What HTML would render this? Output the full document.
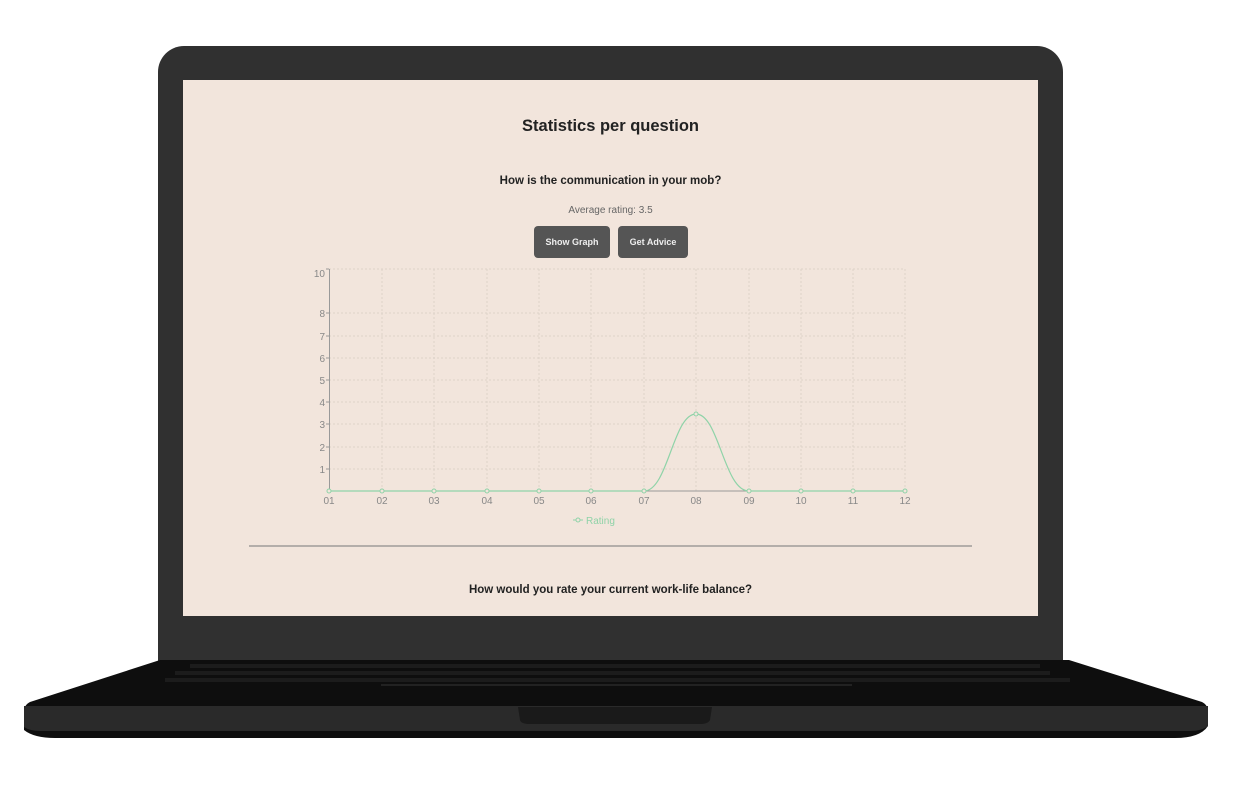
<!DOCTYPE html>
<html><head><style>
body{margin:0;width:1244px;height:789px;background:#fff;position:relative;overflow:hidden;font-family:"Liberation Sans",sans-serif}
.lid{position:absolute;left:158px;top:46px;width:905px;height:630px;background:#303030;border-radius:26px 26px 0 0}
.screen{position:absolute;left:183px;top:80px;width:855px;height:536px;background:#f2e5dc;overflow:hidden}
.t{position:absolute;width:100%;text-align:center;color:#222;font-weight:bold}
.btn{position:absolute;top:146px;height:32px;background:#555;border-radius:4px;color:#eee;font-size:9px;font-weight:bold;line-height:32px;text-align:center}
</style></head><body>
<div class="lid"></div>
<div class="screen">
<div class="t" style="top:37px;font-size:16.5px">Statistics per question</div>
<div class="t" style="top:95px;font-size:11.5px">How is the communication in your mob?</div>
<div class="t" style="top:125px;font-size:10px;font-weight:normal;color:#666">Average rating: 3.5</div>
<div class="btn" style="left:351px;width:76px">Show Graph</div>
<div class="btn" style="left:435px;width:70px">Get Advice</div>
<svg style="position:absolute;left:0;top:0" width="855" height="536">
<g stroke="#ddd2c9" stroke-dasharray="2,2" stroke-width="1">
<line x1="146" y1="189" x2="722" y2="189"/>
<line x1="146" y1="233" x2="722" y2="233"/><line x1="146" y1="256" x2="722" y2="256"/><line x1="146" y1="278" x2="722" y2="278"/><line x1="146" y1="300" x2="722" y2="300"/><line x1="146" y1="322" x2="722" y2="322"/><line x1="146" y1="344" x2="722" y2="344"/><line x1="146" y1="367" x2="722" y2="367"/><line x1="146" y1="389" x2="722" y2="389"/>
<line x1="199" y1="189" x2="199" y2="411"/><line x1="251" y1="189" x2="251" y2="411"/><line x1="304" y1="189" x2="304" y2="411"/><line x1="356" y1="189" x2="356" y2="411"/><line x1="408" y1="189" x2="408" y2="411"/><line x1="461" y1="189" x2="461" y2="411"/><line x1="513" y1="189" x2="513" y2="411"/><line x1="566" y1="189" x2="566" y2="411"/><line x1="618" y1="189" x2="618" y2="411"/><line x1="670" y1="189" x2="670" y2="411"/><line x1="722" y1="189" x2="722" y2="411"/>
</g>
<line x1="146.5" y1="189" x2="146.5" y2="411" stroke="#999"/>
<line x1="146" y1="411" x2="722" y2="411" stroke="#999"/>
<g stroke="#999"><line x1="143" y1="189" x2="146" y2="189"/><line x1="143" y1="233" x2="146" y2="233"/><line x1="143" y1="256" x2="146" y2="256"/><line x1="143" y1="278" x2="146" y2="278"/><line x1="143" y1="300" x2="146" y2="300"/><line x1="143" y1="322" x2="146" y2="322"/><line x1="143" y1="344" x2="146" y2="344"/><line x1="143" y1="367" x2="146" y2="367"/><line x1="143" y1="389" x2="146" y2="389"/></g>
<g font-size="10" fill="#888" font-family="Liberation Sans" text-anchor="end">
<text x="142" y="197">10</text><text x="142" y="237">8</text><text x="142" y="260">7</text><text x="142" y="282">6</text><text x="142" y="304">5</text><text x="142" y="326">4</text><text x="142" y="348">3</text><text x="142" y="371">2</text><text x="142" y="393">1</text>
</g>
<g font-size="10" fill="#888" font-family="Liberation Sans" text-anchor="middle">
<text x="146" y="424">01</text><text x="199" y="424">02</text><text x="251" y="424">03</text><text x="304" y="424">04</text><text x="356" y="424">05</text><text x="408" y="424">06</text><text x="461" y="424">07</text><text x="513" y="424">08</text><text x="566" y="424">09</text><text x="618" y="424">10</text><text x="670" y="424">11</text><text x="722" y="424">12</text>
</g>
<path d="M146 411 L461 411 C485 411,490 334,513 334 C536 334,541 411,566 411 L722 411" fill="none" stroke="#8fd3a8" stroke-width="1.2"/>
<g fill="#f2e5dc" stroke="#8fd3a8"><circle cx="146" cy="411" r="2"/><circle cx="199" cy="411" r="2"/><circle cx="251" cy="411" r="2"/><circle cx="304" cy="411" r="2"/><circle cx="356" cy="411" r="2"/><circle cx="408" cy="411" r="2"/><circle cx="461" cy="411" r="2"/><circle cx="513" cy="334" r="2"/><circle cx="566" cy="411" r="2"/><circle cx="618" cy="411" r="2"/><circle cx="670" cy="411" r="2"/><circle cx="722" cy="411" r="2"/></g>
<line x1="390" y1="440" x2="400" y2="440" stroke="#8fd3a8"/><circle cx="395" cy="440" r="2" fill="#f2e5dc" stroke="#8fd3a8"/>
<text x="403" y="444" font-size="10" fill="#8fd3a8" font-family="Liberation Sans">Rating</text>
<line x1="66" y1="466" x2="789" y2="466" stroke="#777"/>
</svg>
<div class="t" style="top:504px;font-size:11.5px">How would you rate your current work-life balance?</div>
</div>
<svg style="position:absolute;left:0;top:0" width="1244" height="789">
<path d="M160 660 L1069 660 L1202 702 Q1208 705 1208 712 L1208 726 Q1200 738 1175 738 L55 738 Q34 738 24 730 L24 712 Q24 705 30 702 Z" fill="#0e0e0e"/>
<path d="M24 706 L1208 706 L1208 726 Q1202 731 1190 731 L40 731 Q30 731 24 727 Z" fill="#2a2a2a"/>
<path d="M518 707 L712 707 L710 720 Q708 724 700 724 L530 724 Q521 724 520 720 Z" fill="#1a1a1a"/>
<rect x="381" y="684" width="471" height="2" fill="#222"/>
<g fill="#1c1c1c"><rect x="190" y="664" width="850" height="4"/><rect x="175" y="671" width="875" height="4"/><rect x="165" y="678" width="905" height="4"/></g>
</svg>
</body></html>
